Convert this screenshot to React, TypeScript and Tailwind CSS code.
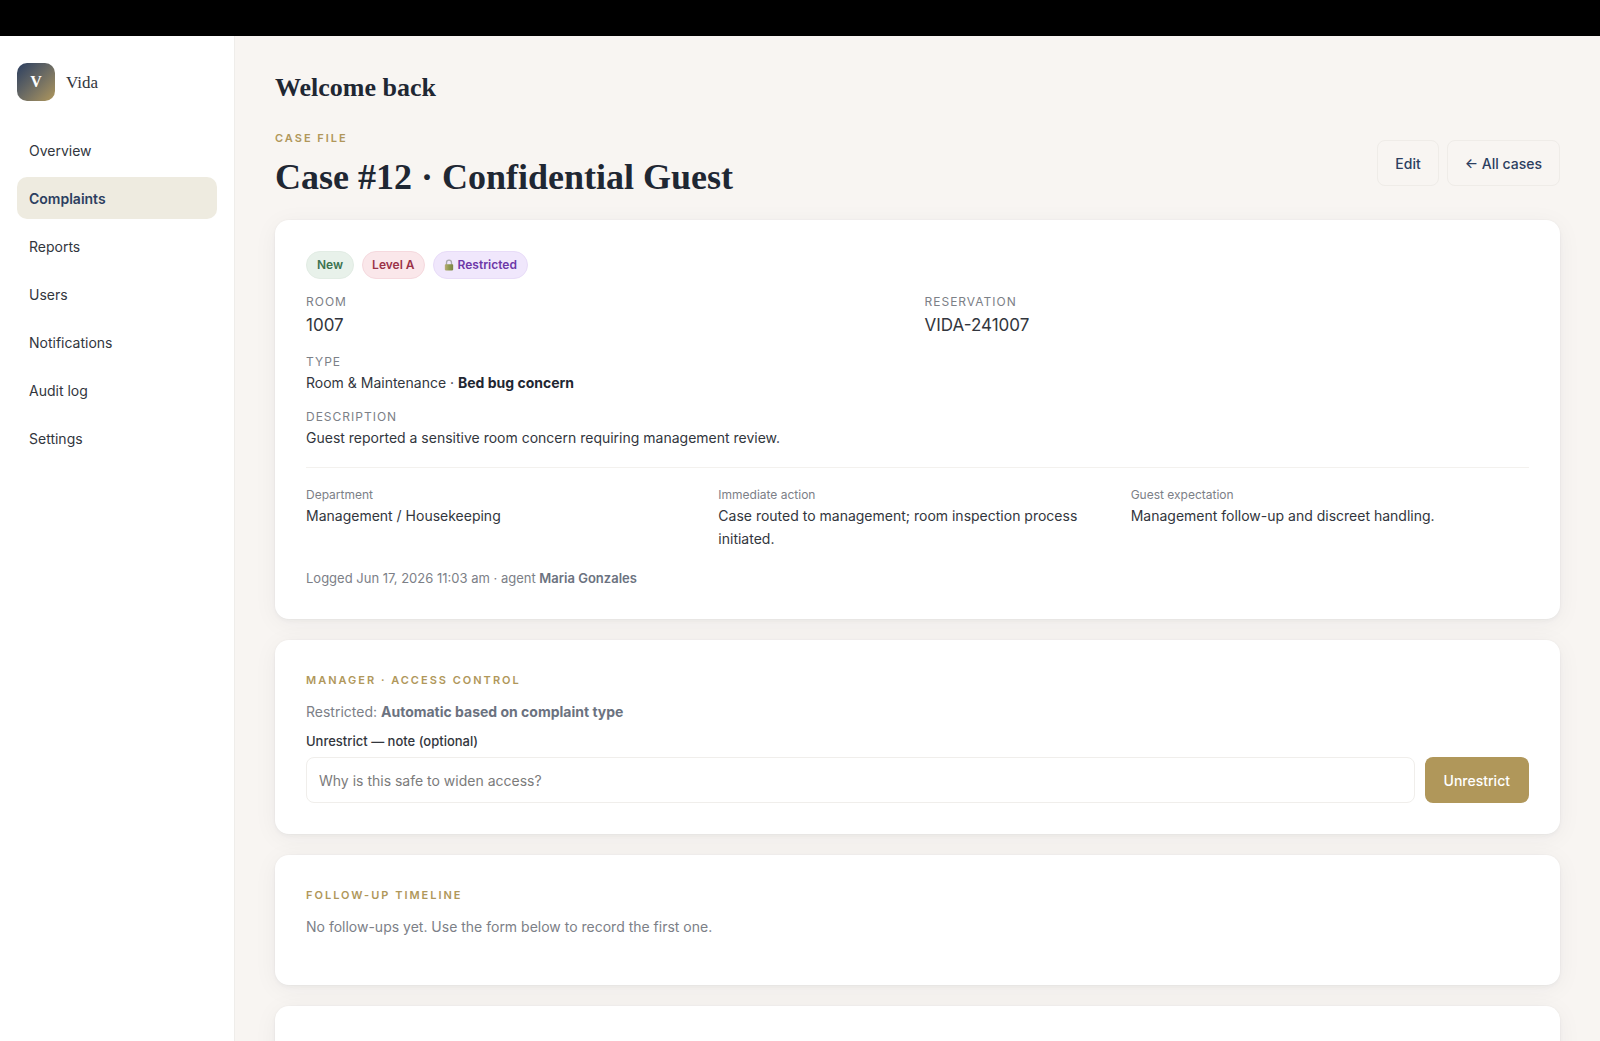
import type { ReactNode } from "react";

const NAV_ITEMS = ["Overview", "Complaints", "Reports", "Users", "Notifications", "Audit log", "Settings"];

const DETAILS = [
  { label: "Department", value: "Management / Housekeeping" },
  { label: "Immediate action", value: "Case routed to management; room inspection process initiated." },
  { label: "Guest expectation", value: "Management follow-up and discreet handling." },
];

function LockIcon() {
  return (
    <svg viewBox="0 0 12 14" className="h-3 w-[10px]" aria-hidden="true">
      <defs>
        <linearGradient id="lock-body" x1="0" y1="0" x2="1" y2="0">
          <stop offset="0" stopColor="#b9ad78" />
          <stop offset="0.5" stopColor="#8f9a50" />
          <stop offset="1" stopColor="#7b8446" />
        </linearGradient>
      </defs>
      <path d="M3 7V4.2a3 3 0 0 1 6 0V7" fill="none" stroke="#a9a9ad" strokeWidth="1.6" />
      <rect x="1" y="6" width="10" height="7.5" rx="1" fill="url(#lock-body)" />
    </svg>
  );
}

function Card({ children }: { children?: ReactNode }) {
  return (
    <section className="rounded-[14px] bg-white p-[31px] shadow-[0_0_0_1px_rgba(31,41,55,0.01),0_2px_4px_rgba(31,41,55,0.04),0_4px_24px_rgba(31,41,55,0.05)]">
      {children}
    </section>
  );
}

function Eyebrow({ children }: { children: ReactNode }) {
  return <p className="text-[11px] leading-[18px] font-semibold tracking-[2px] text-[#b0975a] uppercase">{children}</p>;
}

function Field({ label, children }: { label: string; children: ReactNode }) {
  return (
    <div className="mt-[14px]">
      <dt className="text-xs leading-[18px] tracking-[1px] text-[#7c8087] uppercase">{label}</dt>
      <dd>{children}</dd>
    </div>
  );
}

export default function App() {
  return (
    <div className="flex h-screen flex-col overflow-hidden bg-[#f8f5f2] font-['Inter',sans-serif] text-sm leading-[23px] text-[#32363d]">
      <div className="h-9 shrink-0 bg-black" />

      <div className="flex min-h-0 flex-1">
        <aside className="w-[235px] shrink-0 border-r border-[#efedea] bg-white px-[17px] pt-[27px]">
          <div className="flex items-center gap-[11px]">
            <span className="flex size-[38px] items-center justify-center rounded-[10px] bg-linear-135 from-[#2c3e5f] to-[#b0975a] font-['Liberation_Serif',serif] text-base font-bold text-white">
              V
            </span>
            <span className="font-['Liberation_Serif',serif] text-[17px]">Vida</span>
          </div>

          <nav className="mt-7 flex flex-col gap-[6px]">
            {NAV_ITEMS.map((item) => (
              <a
                key={item}
                href="#"
                className={`flex h-[42px] items-center rounded-[10px] px-3 ${
                  item === "Complaints" ? "bg-[#eeebe0] font-semibold text-[#2c3e5f]" : ""
                }`}
              >
                {item}
              </a>
            ))}
          </nav>
        </aside>

        <main className="min-w-0 flex-1 overflow-y-auto px-10 pt-[37px] [scrollbar-width:none]">
          <h2 className="font-['Liberation_Serif',serif] text-[26px] leading-[30px] font-bold text-[#1f2733]">Welcome back</h2>

          <div className="mt-[26px] mb-[23px] flex items-center justify-between gap-4">
            <div>
              <Eyebrow>Case file</Eyebrow>
              <h1 className="mt-[10px] font-['Liberation_Serif',serif] text-4xl leading-[40px] font-bold text-[#1f2733]">
                Case #12 · Confidential Guest
              </h1>
            </div>
            <div className="flex gap-2 font-medium text-[#2c3e5f]">
              <button type="button" className="h-[46px] rounded-lg border border-[#efece8] px-[17px]">
                Edit
              </button>
              <a href="#" className="flex h-[46px] items-center rounded-lg border border-[#efece8] px-[17px]">
                ← All cases
              </a>
            </div>
          </div>

          <div className="flex flex-col gap-[21px]">
            <Card>
              <div className="flex gap-2 text-xs font-semibold">
                <span className="flex h-7 items-center rounded-full border border-[#e2ece4] bg-[#e8f1ea] px-[10px] text-[#3c7350]">New</span>
                <span className="flex h-7 items-center rounded-full border border-[#f5d9de] bg-[#fae7ea] px-[9px] text-[#9b3247]">Level A</span>
                <span className="flex h-7 items-center gap-1 rounded-full border border-[#e8dcf8] bg-[#f0e7fc] px-[10px] text-[#6d37a8]">
                  <LockIcon />
                  Restricted
                </span>
              </div>

              <dl>
                <div className="grid grid-cols-2 gap-[14px]">
                  <Field label="Room">
                    <span className="block text-[17px] leading-7">1007</span>
                  </Field>
                  <Field label="Reservation">
                    <span className="block text-[17px] leading-7">VIDA-241007</span>
                  </Field>
                </div>
                <Field label="Type">
                  Room &amp; Maintenance · <strong className="font-bold text-[#1f2733]">Bed bug concern</strong>
                </Field>
                <Field label="Description">Guest reported a sensitive room concern requiring management review.</Field>
              </dl>

              <dl className="mt-[18px] grid grid-cols-3 gap-[14px] border-t border-[#f3f1ee] pt-[18px]">
                {DETAILS.map((detail) => (
                  <div key={detail.label}>
                    <dt className="text-xs leading-[18px] text-[#7c8087]">{detail.label}</dt>
                    <dd>{detail.value}</dd>
                  </div>
                ))}
              </dl>

              <p className="mt-[18px] text-[13px] leading-5 text-[#7c8087]">
                Logged Jun 17, 2026 11:03 am · agent <strong className="font-semibold text-[#6b7280]">Maria Gonzales</strong>
              </p>
            </Card>

            <Card>
              <Eyebrow>Manager · Access control</Eyebrow>
              <p className="mt-[11px] text-[#7c8087]">
                Restricted: <strong className="font-bold text-[#6b7280]">Automatic based on complaint type</strong>
              </p>
              <form className="mt-2" onSubmit={(e) => e.preventDefault()}>
                <label htmlFor="note" className="block text-[13px] leading-5 font-medium">
                  Unrestrict — note (optional)
                </label>
                <div className="mt-[6px] flex gap-[10px]">
                  <input
                    id="note"
                    type="text"
                    placeholder="Why is this safe to widen access?"
                    className="h-[46px] min-w-0 flex-1 rounded-lg border border-[#f0eeeb] px-3 placeholder:text-[#7b7b7b]"
                  />
                  <button type="submit" className="h-[46px] rounded-lg bg-[#b0975a] px-[19px] font-medium text-white">
                    Unrestrict
                  </button>
                </div>
              </form>
            </Card>

            <Card>
              <Eyebrow>Follow-up timeline</Eyebrow>
              <p className="mt-[11px] mb-4 text-[#7c8087]">No follow-ups yet. Use the form below to record the first one.</p>
            </Card>

            <Card />
          </div>
        </main>
      </div>
    </div>
  );
}
